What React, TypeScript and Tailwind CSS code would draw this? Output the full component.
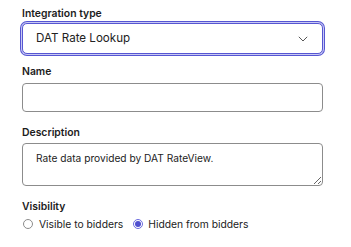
import { useState } from 'react'

export default function App() {
  const [visibility, setVisibility] = useState<'visible' | 'hidden'>('hidden')

  return (
    <div className="h-[247px] w-[351px] bg-white pl-[22px] pt-[6px] font-['Inter',sans-serif] text-[#222]">
      <div className="w-[301px]">
        <label className="block text-[10.4px] font-semibold leading-4 text-[#1c1c1c]">Integration type</label>
        <div className="mt-[1px] flex h-[31px] items-center justify-between rounded-[5px] border border-[#5656d2] pl-[13px] pr-[14px] shadow-[0_0_0_1px_#c9c9f4,0_0_0_2px_#5656d2]">
          <span className="text-[11.6px]">DAT Rate Lookup</span>
          <svg width="10" height="6" viewBox="0 0 10 6" fill="none" stroke="#444" strokeWidth="0.9">
            <path d="M0.8 0.8l4.2 4.2 4.2-4.2" />
          </svg>
        </div>

        <label className="mt-[10px] block text-[10.4px] font-semibold leading-4 text-[#1c1c1c]">Name</label>
        <input className="mt-[3px] block h-[29px] w-full rounded-[4px] border border-[#8c8c8c] px-[13px] text-[10.3px] outline-none" />

        <label className="mt-[13px] block text-[10.4px] font-semibold leading-4 text-[#1c1c1c]">Description</label>
        <textarea
          className="mt-[2px] block h-[43px] w-full rounded-[4px] border border-[#8c8c8c] px-[13px] pt-[6px] text-[10.2px] leading-4 outline-none"
          defaultValue="Rate data provided by DAT RateView."
        />

        <label className="mt-[13px] block text-[10.4px] font-semibold leading-4 text-[#1c1c1c]">Visibility</label>
        <div className="mt-[1px] flex items-center text-[10.3px] leading-4">
          <button className="flex items-center" onClick={() => setVisibility('visible')}>
            <span className={`mr-[6px] ml-[1px] flex h-[10px] w-[10px] items-center justify-center rounded-full border bg-white ${visibility === 'visible' ? 'border-[#6a6ade]' : 'border-[#8c8c8c]'}`}>
              {visibility === 'visible' && <span className="h-[6px] w-[6px] rounded-full bg-[#4f4fcf]" />}
            </span>
            Visible to bidders
          </button>
          <button className="ml-[10px] flex items-center" onClick={() => setVisibility('hidden')}>
            <span className={`mr-[5px] flex h-[10px] w-[10px] items-center justify-center rounded-full border bg-white ${visibility === 'hidden' ? 'border-[#6a6ade]' : 'border-[#8c8c8c]'}`}>
              {visibility === 'hidden' && <span className="h-[6px] w-[6px] rounded-full bg-[#4f4fcf]" />}
            </span>
            Hidden from bidders
          </button>
        </div>
      </div>
    </div>
  )
}
